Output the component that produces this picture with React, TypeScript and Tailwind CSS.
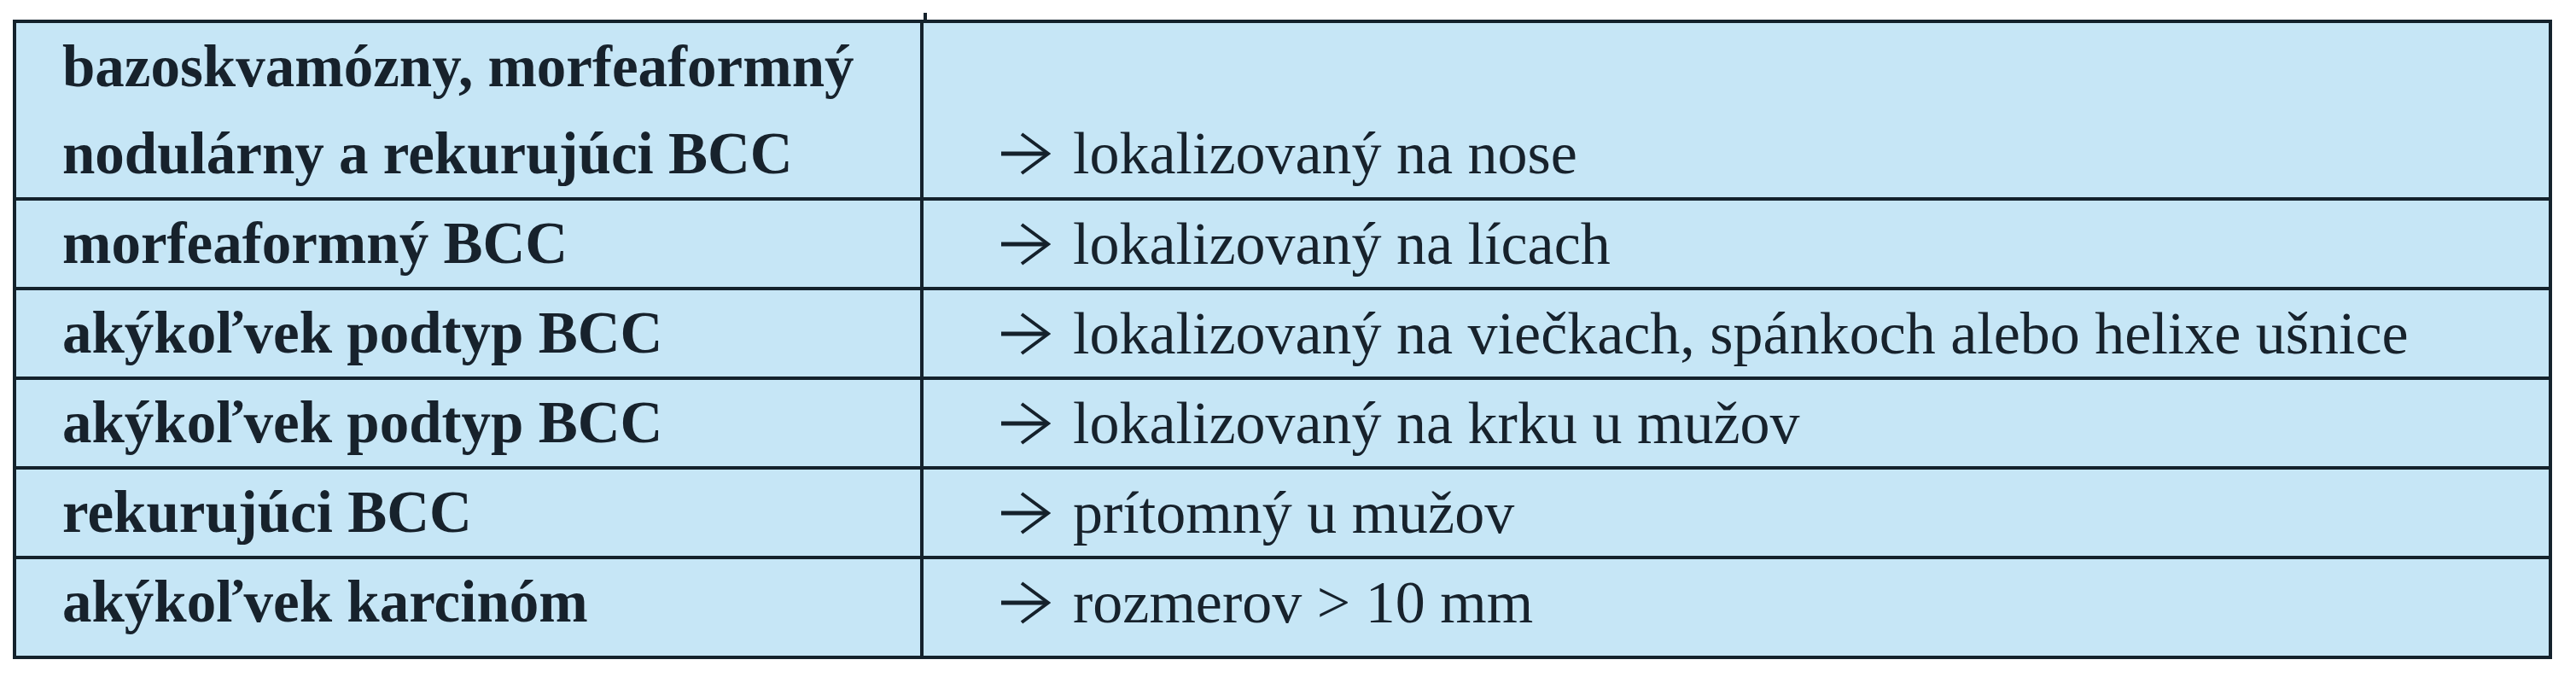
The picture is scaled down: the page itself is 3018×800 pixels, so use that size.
const rows = [
  { left: ["bazoskvamózny, morfeaformný", "nodulárny a rekurujúci BCC"], right: "lokalizovaný na nose" },
  { left: ["morfeaformný BCC"], right: "lokalizovaný na lícach" },
  { left: ["akýkoľvek podtyp BCC"], right: "lokalizovaný na viečkach, spánkoch alebo helixe ušnice" },
  { left: ["akýkoľvek podtyp BCC"], right: "lokalizovaný na krku u mužov" },
  { left: ["rekurujúci BCC"], right: "prítomný u mužov" },
  { left: ["akýkoľvek karcinóm"], right: "rozmerov > 10 mm" },
];

function Arrow() {
  return (
    <svg width="58" height="50" viewBox="0 0 58 50" className="inline-block align-[-2px] mr-[26px]">
      <line x1="0" y1="25" x2="54" y2="25" stroke="#15212b" strokeWidth="5" />
      <polyline points="24,2 55,25 24,48" fill="none" stroke="#15212b" strokeWidth="4" />
    </svg>
  );
}

export default function App() {
  return (
    <div className="w-[3018px] h-[800px] bg-white pt-[15px] pl-[15px] font-['Liberation_Serif',serif] text-[#17222c]">
      <div className="ml-[1067px] w-[4px] h-[8px] bg-[#14222c]" />
      <div className="w-[2975px] border-[4px] border-[#14222c] bg-[#c6e6f6]">
        {rows.map((row, i) => (
          <div
            key={i}
            className={
              "grid grid-cols-[1063px_1fr] " +
              (i < rows.length - 1 ? "border-b-[4px] border-[#14222c]" : "")
            }
          >
            <div
              className={
                "border-r-[4px] border-[#14222c] pl-[54px] font-bold text-[69px] " +
                (i === 0 ? "leading-[102px]" : "leading-[101px]") +
                (i === rows.length - 1 ? " pb-[12px]" : "")
              }
            >
              {row.left.map((line, j) => (
                <div key={j} className="whitespace-nowrap">{line}</div>
              ))}
            </div>
            <div className="flex items-end pl-[91px]">
              <div
                className={
                  "whitespace-nowrap text-[70px] " +
                  (i === 0 ? "leading-[102px]" : "leading-[101px]") +
                  (i === rows.length - 1 ? " pb-[12px]" : "")
                }
              >
                <Arrow />
                {row.right}
              </div>
            </div>
          </div>
        ))}
      </div>
    </div>
  );
}
